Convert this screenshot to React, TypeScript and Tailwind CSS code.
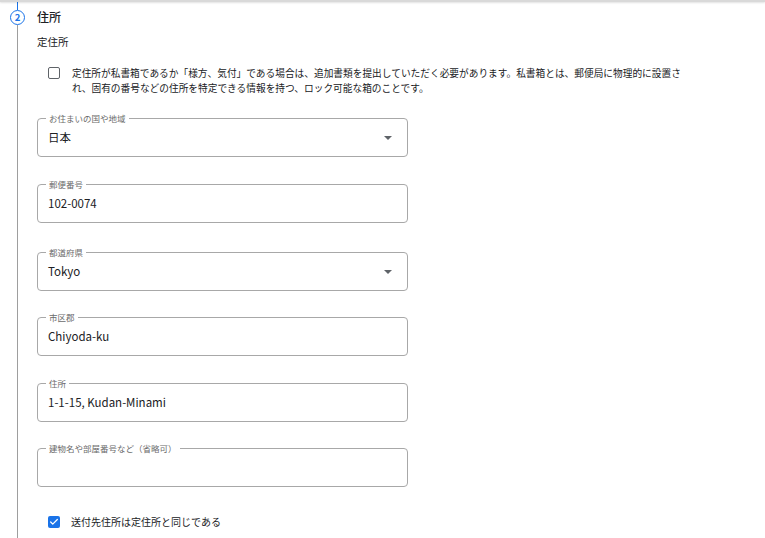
import { Check } from "lucide-react";

const font = { fontFamily: '"Noto Sans CJK JP", "Noto Sans", sans-serif' };

type FieldProps = {
  label: string;
  value?: string;
  select?: boolean;
  className?: string;
};

const Field = ({ label, value, select, className = "" }: FieldProps) => {
  return (
    <div
      className={`relative flex items-center h-[39px] w-[371px] rounded-[4px] border border-[#a8a8a8] pl-[10px] pr-[15px] ${className}`}
    >
      {/* floating label sitting on the top border */}
      <span className="absolute -top-[7px] left-[8px] bg-white px-[3px] text-[8.5px] leading-[12px] text-[#6b6b6b]">
        {label}
      </span>
      <span className="flex-1 text-[11.5px] text-[#202124]">{value}</span>
      {select && (
        <svg width="8" height="4" viewBox="0 0 10 5" className="text-[#5f6368]">
          <path d="M0 0h10L5 5z" fill="currentColor" />
        </svg>
      )}
    </div>
  );
};

const App = () => {
  return (
    <div className="relative w-[765px] h-[538px] overflow-hidden bg-white" style={font}>
      {/* top divider */}
      <div className="absolute top-0 left-0 right-0 h-[2px] bg-[#d9d9d9] shadow-[0_1px_2px_rgba(0,0,0,0.12)]" />

      <div className="flex h-full">
        {/* step rail */}
        <div className="flex w-[35px] flex-col items-center">
          <div className="h-[10px] w-[1.5px] bg-[#1a73e8]" />
          <div className="flex h-[15px] w-[15px] items-center justify-center rounded-full border-[1.5px] border-[#1a73e8] text-[9.5px] font-bold leading-none text-[#1a73e8]">
            2
          </div>
          <div className="w-[1.5px] flex-1 bg-[#9e9e9e]" />
        </div>

        <div className="flex flex-col pl-[2px] text-[#202124]">
          <h2 className="mt-[9px] text-[12px] font-medium leading-[16px]">住所</h2>
          <p className="mt-[10px] text-[10.5px] leading-[14px]">定住所</p>

          <label className="mt-[17px] ml-[11px] flex gap-[12px]">
            <span className="mt-[1px] h-[12px] w-[12px] shrink-0 rounded-[2px] border-[1.5px] border-[#5f6368]" />
            <span className="w-[640px] text-[9.7px] leading-[15px]">
              定住所が私書箱であるか「様方、気付」である場合は、追加書類を提出していただく必要があります。私書箱とは、郵便局に物理的に設置さ
              <br />
              れ、固有の番号などの住所を特定できる情報を持つ、ロック可能な箱のことです。
            </span>
          </label>

          <Field className="mt-[22px]" label="お住まいの国や地域" value="日本" select />
          <Field className="mt-[27px]" label="郵便番号" value="102-0074" />
          <Field className="mt-[29px]" label="都道府県" value="Tokyo" select />
          <Field className="mt-[26px]" label="市区郡" value="Chiyoda-ku" />
          <Field className="mt-[27px]" label="住所" value="1-1-15, Kudan-Minami" />
          <Field className="mt-[26px]" label="建物名や部屋番号など（省略可）" />

          <label className="mt-[28px] ml-[11px] flex items-center gap-[11px]">
            <span className="flex h-[12px] w-[12px] items-center justify-center rounded-[2px] bg-[#1a73e8]">
              <Check size={10} strokeWidth={3} className="text-white" />
            </span>
            <span className="text-[10px] leading-[14px]">送付先住所は定住所と同じである</span>
          </label>
        </div>
      </div>
    </div>
  );
};

export default App;
